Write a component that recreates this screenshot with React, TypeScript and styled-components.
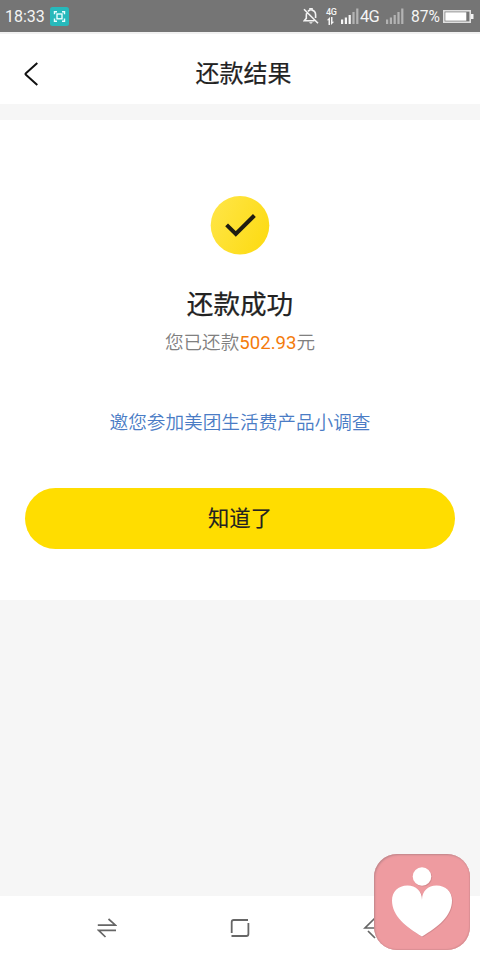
import React from 'react';
import styled, { createGlobalStyle } from 'styled-components';

const GlobalStyle = createGlobalStyle`
  * { box-sizing: border-box; }
  body {
    margin: 0;
    background: #f6f6f6;
    font-family: Roboto, 'Noto Sans CJK SC', sans-serif;
    color: #222;
  }
`;

const Screen = styled.div`
  position: relative;
  display: flex;
  flex-direction: column;
  width: 480px;
  height: 960px;
  overflow: hidden;
  background: #f6f6f6;
`;

const StatusBar = styled.header`
  display: flex;
  align-items: center;
  flex: none;
  height: 32px;
  padding: 0 6px 0 5px;
  background: #757575;
  color: #f4f4f4;
  svg { display: block; flex: none; }
`;

const StatusText = styled.span<{ $width: number; $size?: number; $spacing?: number; $inset?: number }>`
  flex: none;
  width: ${p => p.$width}px;
  padding: 1px 0 0 ${p => p.$inset ?? 0}px;
  font-size: ${p => p.$size ?? 16}px;
  letter-spacing: ${p => p.$spacing ?? 0}px;
  line-height: 20px;
  white-space: nowrap;
`;

const StatusIcons = styled.div`
  display: flex;
  align-items: center;
  margin-left: auto;
`;

const DataBadge = styled.div`
  display: flex;
  flex-direction: column;
  width: 15px;
  margin-left: 7px;
  font-size: 9px;
  font-weight: 500;
  line-height: 9px;
  letter-spacing: -0.3px;
`;

const TitleBar = styled.div`
  display: grid;
  grid-template-columns: 60px 1fr 60px;
  align-items: center;
  flex: none;
  height: 72px;
  padding: 0 7px 0 0;
  border-top: 2px solid #f1f1f1;
  background: #fff;
`;

const BackButton = styled.button`
  display: flex;
  padding: 10px 0 0 24px;
  border: 0;
  background: none;
`;

const Title = styled.h1`
  margin: 9px 0 0 14px;
  font-size: 24px;
  font-weight: 400;
  -webkit-text-stroke: 0.2px currentColor;
  line-height: 36px;
  text-align: center;
  white-space: nowrap;
`;

const ResultCard = styled.main`
  display: flex;
  flex-direction: column;
  align-items: center;
  flex: none;
  height: 480px;
  margin-top: 16px;
  padding: 76px 25px 0;
  background: #fff;
`;

const ResultHeading = styled.h2`
  margin: 30px 0 0;
  font-size: 26.6px;
  font-weight: 400;
  -webkit-text-stroke: 0.25px currentColor;
  line-height: 40px;
`;

const ResultDetail = styled.p`
  margin: 4px 0 0;
  font-size: 18.6px;
  font-weight: 350;
  line-height: 28px;
  color: #808080;
`;

const Amount = styled.span`
  font-weight: 400;
  color: #f47b0b;
`;

const SurveyLink = styled.a`
  margin-top: 52px;
  font-size: 18.65px;
  font-weight: 350;
  line-height: 28px;
  color: #4a7cc5;
`;

const ConfirmButton = styled.button`
  width: 430px;
  height: 61px;
  margin-top: 51px;
  padding: 0;
  border: 0;
  border-radius: 31px;
  background: #fd0;
  color: #222;
  font: 400 21.3px/32px Roboto, 'Noto Sans CJK SC', sans-serif;
  -webkit-text-stroke: 0.15px currentColor;
`;

const NavBar = styled.nav`
  display: grid;
  grid-template-columns: repeat(3, 133px);
  justify-content: center;
  align-items: center;
  justify-items: center;
  flex: none;
  height: 64px;
  margin-top: auto;
  background: #fff;
`;

const FloatingBadge = styled.div`
  position: absolute;
  right: 10px;
  bottom: 10px;
  width: 96px;
  height: 96px;
  border-radius: 23px;
  background: #ee9ba0;
  box-shadow: inset 1px 1px 2px #bd858a, inset -1px -1px 1px #dc9195;
  svg { display: block; }
`;

function ScanIcon() {
  return (
    <svg width="19" height="19" viewBox="0 0 19 19" fill="none" stroke="#e9ffff" strokeWidth="1.4">
      <rect width="19" height="19" rx="2.5" fill="#27b9bb" stroke="none" />
      <path d="M4.5 7.3V4.7H7M12 4.7h2.5v2.6M14.5 11.6v2.6H12M7 14.2H4.5v-2.6" />
      <rect x="7" y="7" width="5" height="4.8" />
    </svg>
  );
}

function MutedBell() {
  return (
    <svg width="16" height="17" viewBox="0 0 16 17" fill="none" stroke="#f4f4f4" strokeWidth="1.6">
      <path d="M1 1.2l14 14M5 3.4C6 2.4 6.6 2.4 7 2.1V.8h2v1.3c2.5.6 3.6 2.4 3.6 4.7v3.1M3.6 5.2C3.2 7 3.3 8.5 3.3 10.4L1.2 12.8h10.2" />
      <path d="M6.2 14.2c.4 1.7 3 1.7 3.4 0z" fill="#f4f4f4" stroke="none" />
    </svg>
  );
}

function DataArrows() {
  return (
    <svg width="9" height="8" viewBox="0 0 9 8" fill="#f4f4f4">
      <path d="M2.5 8V3.2H.8L4 0v8zM5 0v8l3.2-3.2H6.5V0z" />
    </svg>
  );
}

function Signal({ strength }: { strength: number }) {
  return (
    <svg width="18" height="16" viewBox="0 0 18 16">
      {[4.5, 6.5, 9, 12, 15.5].map((height, i) => (
        <rect key={i} x={i * 3.8} y={16 - height} width="2.2" height={height} fill={i < strength ? '#f7f7f7' : '#b3b3b3'} />
      ))}
    </svg>
  );
}

function Battery() {
  return (
    <svg width="31" height="13" viewBox="0 0 31 13">
      <rect x=".8" y=".8" width="26.4" height="11.4" fill="none" stroke="#e0e0e0" strokeWidth="1.6" />
      <rect x="2.3" y="2.3" width="21" height="8.4" fill="#fff" />
      <rect x="28" y="4" width="2.5" height="5" fill="#f4f4f4" />
    </svg>
  );
}

export default function App() {
  return (
    <>
      <GlobalStyle />
      <Screen>
        <StatusBar>
          <StatusText $width={45}>18:33</StatusText>
          <ScanIcon />
          <StatusIcons>
            <MutedBell />
            <DataBadge>4G<DataArrows /></DataBadge>
            <Signal strength={3} />
            <StatusText $width={27} $size={16.5} $spacing={-0.7} $inset={1}>4G</StatusText>
            <Signal strength={0} />
            <StatusText $width={39} $size={15.6} $inset={7}>87%</StatusText>
            <Battery />
          </StatusIcons>
        </StatusBar>

        <TitleBar>
          <BackButton aria-label="返回">
            <svg width="15" height="24" viewBox="0 0 15 24" fill="none" stroke="#111" strokeWidth="2">
              <path d="M13.3 1L1.9 11.2q-.9.8 0 1.6L13.3 23" />
            </svg>
          </BackButton>
          <Title>还款结果</Title>
        </TitleBar>

        <ResultCard>
          <svg width="60" height="59" viewBox="0 0 60 59">
            <defs>
              <linearGradient id="coin" x1="0" y1="0" x2="1" y2="0.5">
                <stop offset="0" stopColor="#ffe64a" />
                <stop offset="1" stopColor="#fddc18" />
              </linearGradient>
            </defs>
            <circle cx="30" cy="29.3" r="29.3" fill="url(#coin)" />
            <path d="M16.6 28.8l9.2 9.1 18.6-18.4" fill="none" stroke="#1f1d12" strokeWidth="4" />
          </svg>
          <ResultHeading>还款成功</ResultHeading>
          <ResultDetail>您已还款<Amount>502.93</Amount>元</ResultDetail>
          <SurveyLink>邀您参加美团生活费产品小调查</SurveyLink>
          <ConfirmButton>知道了</ConfirmButton>
        </ResultCard>

        <NavBar>
          <svg width="20" height="20" viewBox="0 0 20 20" fill="none" stroke="#666" strokeWidth="1.7">
            <path d="M.8 7.2h17.7L11.5 1M19 12.4H1.7L8.5 19" />
          </svg>
          <svg width="20" height="20" viewBox="0 0 20 20" fill="none" stroke="#666" strokeWidth="1.8">
            <path d="M1.7 15V4q0-2 2-2H18M18.4 5v11q0 2-2 2H1.5" />
          </svg>
          <svg width="20" height="22" viewBox="0 0 20 22" fill="none" stroke="#666" strokeWidth="1.7">
            <path d="M12 1L2 11h17M5 14l7 7" />
          </svg>
        </NavBar>

        <FloatingBadge>
          <svg width="96" height="96" viewBox="0 0 96 96">
            <g fill="#b8747a" opacity=".45" transform="translate(.8 .8)">
              <circle cx="48" cy="22.5" r="9.3" />
              <path d="M48 46C48 37 42 31.5 33.5 31.5C24 31.5 18 38 18 46.5C18 62 32 73 48 82.5C64 73 78 62 78 46.5C78 38 72 31.5 62.5 31.5C54 31.5 48 37 48 46z" />
            </g>
            <circle cx="48" cy="22.5" r="9.3" fill="#fff" />
            <path d="M48 46C48 37 42 31.5 33.5 31.5C24 31.5 18 38 18 46.5C18 62 32 73 48 82.5C64 73 78 62 78 46.5C78 38 72 31.5 62.5 31.5C54 31.5 48 37 48 46z" fill="#fff" />
          </svg>
        </FloatingBadge>
      </Screen>
    </>
  );
}
